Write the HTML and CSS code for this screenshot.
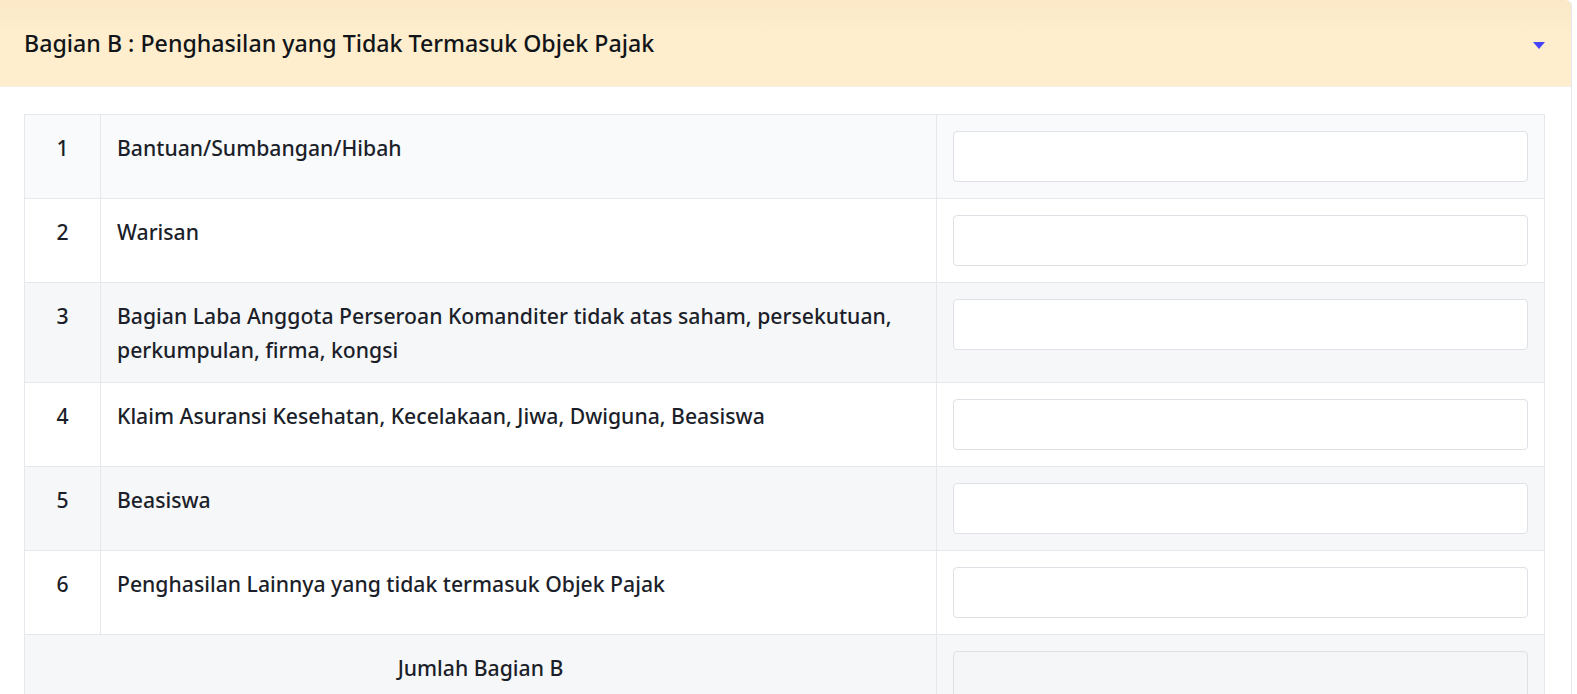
FILE: index.html
```html
<!DOCTYPE html>
<html lang="id">
<head>
<meta charset="utf-8">
<title>Bagian B</title>
<link rel="stylesheet" href="styles.css">
</head>
<body>
<section class="card">
  <header class="card-header">
    <h2 class="card-title">Bagian B : Penghasilan yang Tidak Termasuk Objek Pajak</h2>
    <span class="caret"></span>
  </header>
  <div class="card-body">
    <table class="form-table">
      <colgroup>
        <col class="c-no">
        <col class="c-label">
        <col class="c-input">
      </colgroup>
      <tbody>
        <tr class="odd first">
          <td class="no">1</td>
          <td class="label">Bantuan/Sumbangan/Hibah</td>
          <td class="field"><input class="input" type="text"></td>
        </tr>
        <tr>
          <td class="no">2</td>
          <td class="label">Warisan</td>
          <td class="field"><input class="input" type="text"></td>
        </tr>
        <tr class="odd">
          <td class="no">3</td>
          <td class="label">Bagian Laba Anggota Perseroan Komanditer tidak atas saham, persekutuan, perkumpulan, firma, kongsi</td>
          <td class="field"><input class="input" type="text"></td>
        </tr>
        <tr>
          <td class="no">4</td>
          <td class="label">Klaim Asuransi Kesehatan, Kecelakaan, Jiwa, Dwiguna, Beasiswa</td>
          <td class="field"><input class="input" type="text"></td>
        </tr>
        <tr class="odd">
          <td class="no">5</td>
          <td class="label">Beasiswa</td>
          <td class="field"><input class="input" type="text"></td>
        </tr>
        <tr>
          <td class="no">6</td>
          <td class="label">Penghasilan Lainnya yang tidak termasuk Objek Pajak</td>
          <td class="field"><input class="input" type="text"></td>
        </tr>
        <tr class="odd total">
          <td class="sum-label" colspan="2">Jumlah Bagian B</td>
          <td class="field"><input class="input input-disabled" type="text" disabled></td>
        </tr>
      </tbody>
    </table>
  </div>
</section>
</body>
</html>
```

FILE: styles.css
```css
* { box-sizing: border-box; }

html, body {
  margin: 0;
  padding: 0;
  background: #ffffff;
}

body {
  font-family: "Noto Sans", "Open Sans", sans-serif;
  color: #1c1f2a;
  width: 1577px;
  height: 694px;
  overflow: hidden;
}

.card {
  width: 1572px;
  border-right: 1px solid #e6e7ee;
  border-top-right-radius: 6px;
  background: #ffffff;
}

.card-header {
  height: 87px;
  display: flex;
  align-items: center;
  justify-content: space-between;
  padding: 0 26px 0 24px;
  background: linear-gradient(#fae8c7, #feeecd 40%, #feeecd);
  border-top-right-radius: 6px;
  border-bottom: 1px solid #f4efe4;
}

.card-title {
  margin: 0;
  font-size: 23.2px;
  font-weight: 500;
  color: #111418;
  letter-spacing: 0;
}

.caret {
  width: 0;
  height: 0;
  border-left: 6px solid transparent;
  border-right: 6px solid transparent;
  border-top: 7px solid #4444ff;
  margin-top: 4px;
}

.card-body {
  padding: 27px 27px 0 24px;
}

.form-table {
  width: 1520px;
  border-collapse: collapse;
  table-layout: fixed;
  border: 1px solid #e7e8ee;
}

.c-no { width: 76px; }
.c-label { width: 836px; }
.c-input { width: 608px; }

.form-table td {
  border: 1px solid #e7e8ee;
  padding: 16px;
  vertical-align: top;
  font-size: 21.2px;
  font-weight: 500;
  line-height: 33.5px;
  color: #1c1f2a;
}

.form-table tr { background: #ffffff; }
.form-table tr.odd { background: #f6f7f9; }
.form-table tr.first { background: #f9fafb; }

.form-table td.no {
  text-align: center;
  padding-left: 8px;
  padding-right: 8px;
}

.form-table td.sum-label {
  text-align: center;
}

.form-table td.field {
  padding: 16px;
}

.input {
  display: block;
  width: 100%;
  height: 51px;
  margin: 0;
  border: 1px solid #dfe1e7;
  border-radius: 4px;
  background: #ffffff;
  font-family: inherit;
  font-size: 16px;
  padding: 0 12px;
}

.input-disabled {
  background: #f5f6f8;
}
```
